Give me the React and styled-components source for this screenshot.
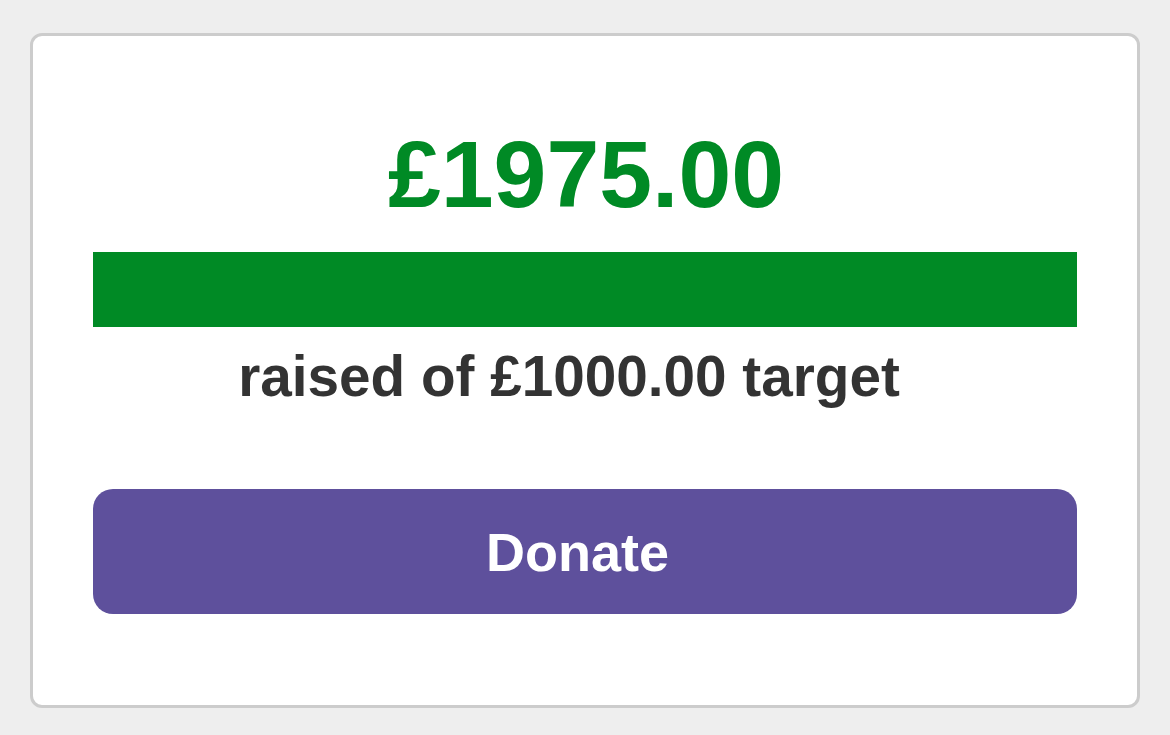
import React from 'react'
import styled, { createGlobalStyle } from 'styled-components'

const Global = createGlobalStyle`
  html, body {
    margin: 0;
    background: #eeeeee;
  }
  body {
    font-family: 'Liberation Sans', Arial, Helvetica, sans-serif;
  }
`

const Page = styled.div`
  width: 1170px;
  height: 735px;
  padding: 33px 30px 0 30px;
  box-sizing: border-box;
`

const Card = styled.div`
  width: 1110px;
  height: 675px;
  box-sizing: border-box;
  background: #ffffff;
  border: 3px solid #cccccc;
  border-radius: 12px;
  padding: 91px 60px 0 60px;
  display: flex;
  flex-direction: column;
`

const Amount = styled.div`
  font-size: 95px;
  line-height: 95px;
  font-weight: 700;
  color: #008a25;
  text-align: center;
  padding-left: 2px;
`

const Bar = styled.div`
  margin-top: 30px;
  height: 75px;
  background: #e8e8e8;
`

const Fill = styled.div`
  height: 100%;
  background: #008a25;
`

const Target = styled.div`
  margin-top: 22px;
  font-size: 56.7px;
  line-height: 56px;
  font-weight: 700;
  color: #333333;
  text-align: center;
  padding-right: 32px;
`

const DonateButton = styled.button`
  margin-top: 84px;
  height: 125px;
  width: 100%;
  border: none;
  border-radius: 20px;
  background: #5e509c;
  color: #ffffff;
  font-family: 'Liberation Sans', Arial, Helvetica, sans-serif;
  font-size: 54px;
  font-weight: 700;
  padding: 0 15px 0 0;
  cursor: pointer;
`

const raised = 1975
const target = 1000

export default function App() {
  const pct = Math.min(100, (raised / target) * 100)
  return (
    <>
      <Global />
      <Page>
        <Card>
          <Amount>£{raised.toFixed(2)}</Amount>
          <Bar>
            <Fill style={{ width: `${pct}%` }} />
          </Bar>
          <Target>raised of £{target.toFixed(2)} target</Target>
          <DonateButton>Donate</DonateButton>
        </Card>
      </Page>
    </>
  )
}
